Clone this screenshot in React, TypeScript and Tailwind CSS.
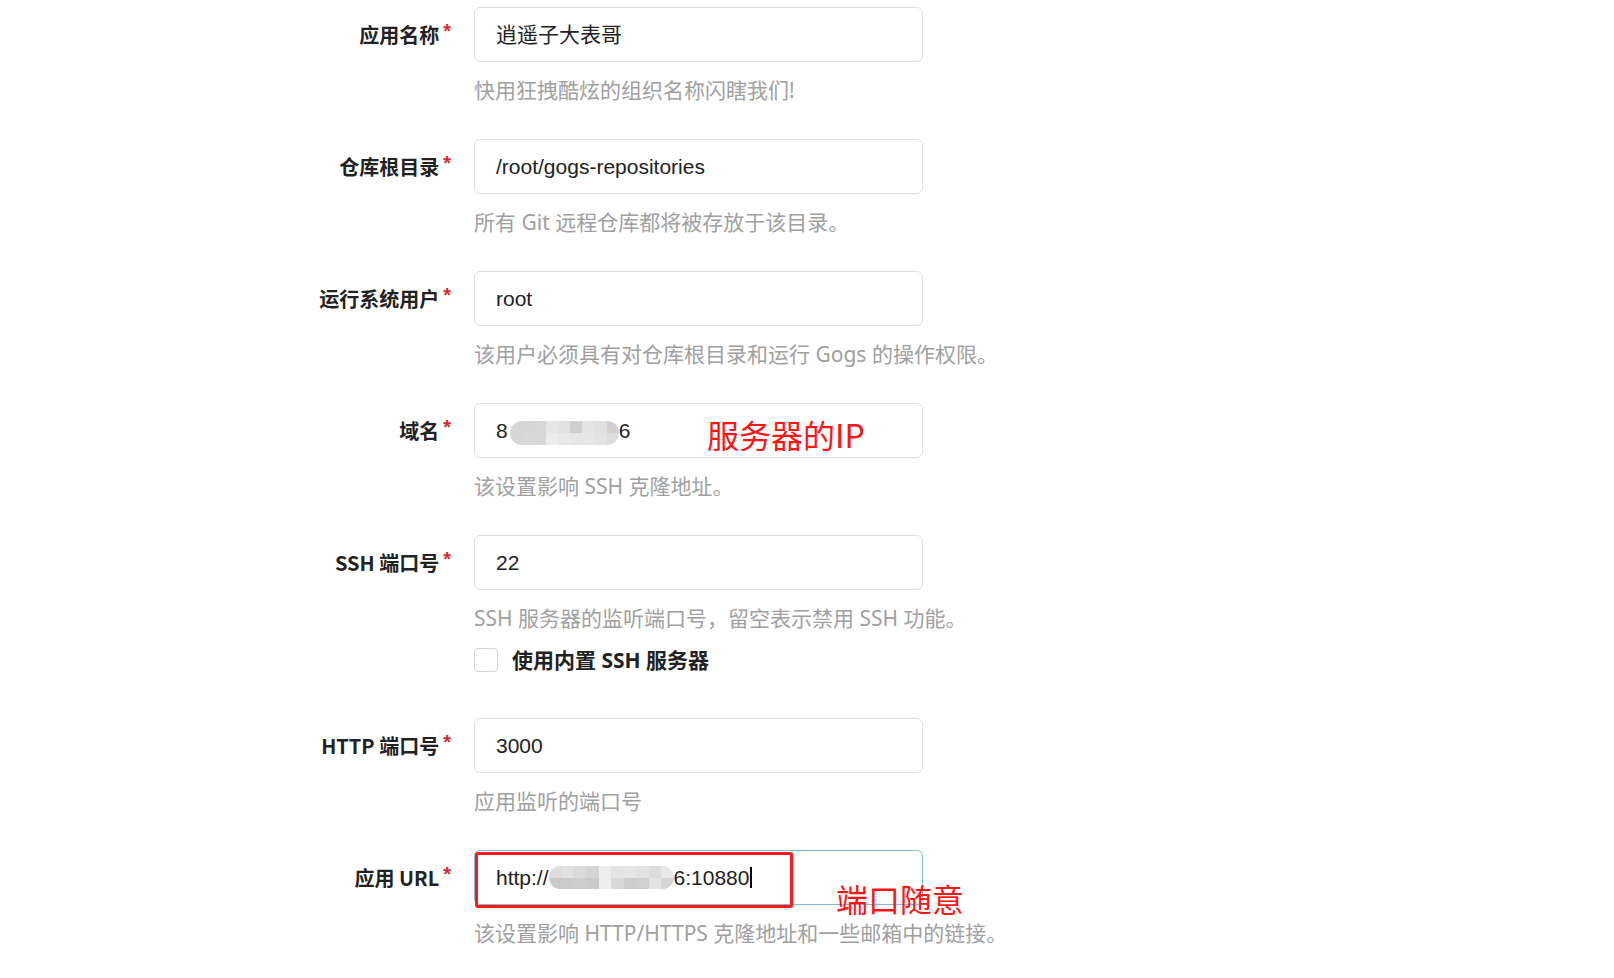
import React from 'react';

type Cell = [string, string];

// pixel-mosaic blur used to hide the server address
const ipCells: Cell[] = [
  ['bg-[#d6d6d6]', 'bg-[#d6d6d6]'],
  ['bg-[#d6d6d6]', 'bg-[#d8d8d8]'],
  ['bg-[#d7d7d7]', 'bg-[#d7d7d7]'],
  ['bg-[#e6e6e6]', 'bg-[#ececec]'],
  ['bg-[#e2e2e2]', 'bg-[#e8e8e8]'],
  ['bg-[#cfcfcf]', 'bg-[#e5e5e5]'],
  ['bg-[#e4e4e4]', 'bg-[#e6e6e6]'],
  ['bg-[#e0e0e0]', 'bg-[#e3e3e3]'],
  ['bg-[#d0d0d0]', 'bg-[#dcdcdc]'],
];

const urlCells: Cell[] = [
  ['bg-[#dcdcdc]', 'bg-[#c9c9c9]'],
  ['bg-[#e2e2e2]', 'bg-[#cbcbcb]'],
  ['bg-[#dadada]', 'bg-[#cdcdcd]'],
  ['bg-[#d4d4d4]', 'bg-[#cbcbcb]'],
  ['bg-[#ececec]', 'bg-[#ededed]'],
  ['bg-[#e4e4e4]', 'bg-[#d8d8d8]'],
  ['bg-[#e6e6e6]', 'bg-[#cdcdcd]'],
  ['bg-[#e2e2e2]', 'bg-[#d0d0d0]'],
  ['bg-[#dcdcdc]', 'bg-[#e3e3e3]'],
  ['bg-[#e8e8e8]', 'bg-[#d6d6d6]'],
];

function Mosaic({ cells, className }: { cells: Cell[]; className: string }) {
  return (
    <span className={`inline-flex overflow-hidden rounded-full ${className}`}>
      {cells.map((c, i) => (
        <span key={i} className="flex flex-1 flex-col">
          <span className={`flex-1 ${c[0]}`}></span>
          <span className={`flex-1 ${c[1]}`}></span>
        </span>
      ))}
    </span>
  );
}

interface FieldProps {
  label: string;
  help: string;
  children: React.ReactNode;
  focused?: boolean;
  extra?: React.ReactNode;
  overlay?: React.ReactNode;
}

function Field({ label, help, children, focused, extra, overlay }: FieldProps) {
  return (
    <div className="flex">
      <div className="w-[451px] shrink-0 text-right text-[20px] leading-[55px] font-bold text-[#222] font-['Noto_Sans_CJK_SC',sans-serif]">
        {label}
        <span className="relative -top-[5px] ml-[4px] text-[#db2828] font-['Liberation_Sans',sans-serif]">*</span>
      </div>
      <div className="ml-[23px] flex flex-col">
        <div className="relative">
          <div
            className={`flex h-[55px] w-[449px] items-center rounded-[6px] border bg-white pl-[21px] text-[21px] text-[#222] font-['Liberation_Sans','Noto_Sans_CJK_SC',sans-serif] ${
              focused ? 'border-[#85b7d9]' : 'border-[#dedede]'
            }`}
          >
            {children}
          </div>
          {overlay}
        </div>
        <div className="mt-[14px] text-[21px] leading-[28px] text-[#a0a0a0] font-['Noto_Sans','Noto_Sans_CJK_SC',sans-serif]">
          {help}
        </div>
        {extra}
      </div>
    </div>
  );
}

export default function App() {
  return (
    <div className="min-h-screen w-full bg-white pt-[7px]">
      <div className="flex flex-col">
        <div className="pb-[35px]">
          <Field label="应用名称" help="快用狂拽酷炫的组织名称闪瞎我们!">
            逍遥子大表哥
          </Field>
        </div>
        <div className="pb-[35px]">
          <Field label="仓库根目录" help="所有 Git 远程仓库都将被存放于该目录。">
            /root/gogs-repositories
          </Field>
        </div>
        <div className="pb-[35px]">
          <Field label="运行系统用户" help="该用户必须具有对仓库根目录和运行 Gogs 的操作权限。">
            root
          </Field>
        </div>
        <div className="pb-[35px]">
          <Field
            label="域名"
            help="该设置影响 SSH 克隆地址。"
            overlay={
              <div className="absolute left-[233px] top-[15px] text-[32px] leading-[32px] text-[#ff1414] font-['Noto_Sans_CJK_SC',sans-serif]">
                服务器的IP
              </div>
            }
          >
            <span>8</span>
            <Mosaic cells={ipCells} className="relative top-[2px] ml-[2px] h-[24px] w-[109px]" />
            <span>6</span>
          </Field>
        </div>
        <div className="pb-[46px]">
          <Field
            label="SSH 端口号"
            help="SSH 服务器的监听端口号，留空表示禁用 SSH 功能。"
            extra={
              <div className="mt-[16px] flex h-[24px] items-center">
                <span className="h-[24px] w-[24px] rounded-[4px] border border-[#d4d4d5] bg-white"></span>
                <span className="ml-[14px] text-[21px] leading-[24px] font-bold text-[#222] font-['Open_Sans','Noto_Sans_CJK_SC',sans-serif]">
                  使用内置 SSH 服务器
                </span>
              </div>
            }
          >
            22
          </Field>
        </div>
        <div className="pb-[35px]">
          <Field label="HTTP 端口号" help="应用监听的端口号">
            3000
          </Field>
        </div>
        <div>
          <Field
            label="应用 URL"
            help="该设置影响 HTTP/HTTPS 克隆地址和一些邮箱中的链接。"
            focused
            overlay={
              <>
                <div className="absolute left-[1px] top-[2px] h-[56px] w-[318px] rounded-[3px] border-[3px] border-[#ff1a1a]"></div>
                <div className="absolute left-[362px] top-[32px] text-[32px] leading-[32px] text-[#ff1414] font-['Noto_Sans_CJK_SC',sans-serif]">
                  端口随意
                </div>
              </>
            }
          >
            <span>http://</span>
            <Mosaic cells={urlCells} className="h-[23px] w-[125px]" />
            <span>6:10880</span>
            <span className="ml-[1px] inline-block h-[21px] w-[2px] bg-black"></span>
          </Field>
        </div>
      </div>
    </div>
  );
}
